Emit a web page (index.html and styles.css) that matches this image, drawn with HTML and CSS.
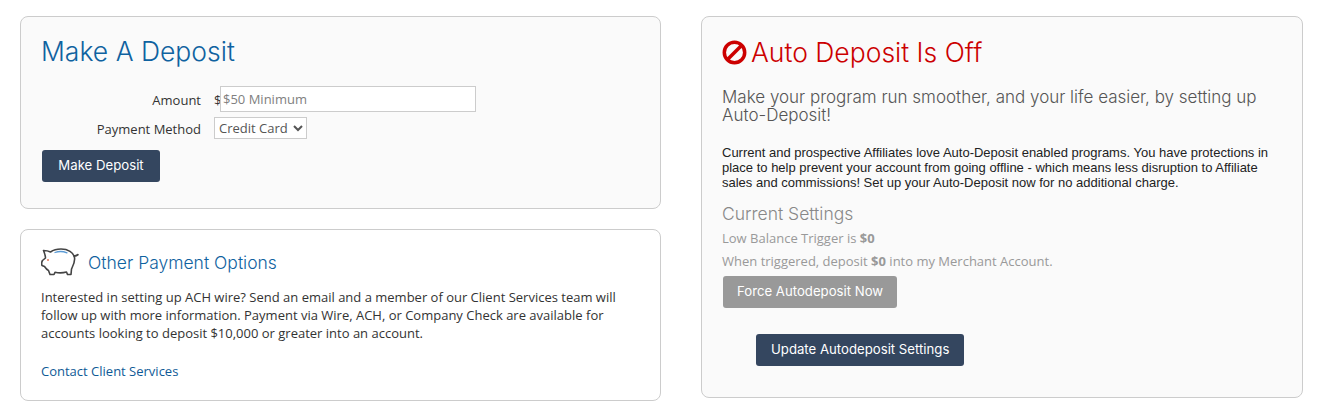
FILE: index.html
```html
<!DOCTYPE html>
<html lang="en">

<head>
    <meta charset="utf-8">
    <title>Deposit</title>
    <link rel="stylesheet" href="styles.css">
</head>

<body>
    <div class="page">
        <div class="col">
            <section class="card deposit">
                <h1 class="title">Make A Deposit</h1>
                <div class="form-row amount-row">
                    <label class="label">Amount</label>
                    <span class="dollar">$</span><input class="amount" type="text" placeholder="$50 Minimum">
                </div>
                <div class="form-row method-row">
                    <label class="label">Payment Method</label>
                    <select class="method">
                        <option>Credit Card</option>
                    </select>
                </div>
                <button class="btn">Make Deposit</button>
            </section>
            <section class="card other">
                <div class="other-head">
                    <svg class="piggy" width="38" height="29" viewBox="0 0 38 29" fill="none">
                        <path d="M2.500 2.500C5 2.500 7.500 3 9.500 4 13 1.500 17 1 20 1c7 0 12.500 3.500 13.500 8.500.8 4.500-1.500 8.500-3 11.500l-.5 5.500h-3.500l-1-2.500c-3.500 1-8 1-11.500.3l-1 2.200H9l-1.500-4c-2-1-3-2.500-4-4L1 17.500c-.7-2-.4-3.500.5-5l3-2.500c0-2-1-5-2-7.500z" stroke="#444" stroke-width="1.600" stroke-linejoin="round"/>
                        <path d="M33.500 8c1.300-.2 2.300-.6 3.200-1.300" stroke="#444" stroke-width="2" stroke-linecap="round"/>
                        <path d="M14 4.500c3.500-1.300 8-1.300 12 .3" stroke="#5b9bd5" stroke-width="1.300" stroke-linecap="round"/>
                        <circle cx="7" cy="12" r="1" fill="#e8795a"/>
                    </svg>
                    <h2 class="other-title">Other Payment Options</h2>
                </div>
                <p class="other-text">Interested in setting up ACH wire? Send an email and a member of our Client Services team will follow up with more information. Payment via Wire, ACH, or Company Check are available for accounts looking to deposit $10,000 or greater into an account.</p>
                <a class="contact" href="#">Contact Client Services</a>
            </section>
        </div>
        <section class="card auto">
            <h1 class="title off">
                <svg class="no-icon" width="25" height="25" viewBox="0 0 25 25" fill="none">
                    <circle cx="12.500" cy="12.500" r="10.200" stroke="#c00" stroke-width="3.500"/>
                    <path d="M5.500 19.500 19.500 5.500" stroke="#c00" stroke-width="3.500"/>
                </svg>
                Auto Deposit Is Off
            </h1>
            <p class="lead">Make your program run smoother, and your life easier, by setting up Auto-Deposit!</p>
            <p class="blurb">Current and prospective Affiliates love Auto-Deposit enabled programs. You have protections in place to help prevent your account from going offline - which means less disruption to Affiliate sales and commissions! Set up your Auto-Deposit now for no additional charge.</p>
            <h3 class="settings-title">Current Settings</h3>
            <p class="setting">Low Balance Trigger is <b>$0</b></p>
            <p class="setting">When triggered, deposit <b>$0</b> into my Merchant Account.</p>
            <button class="btn btn-grey">Force Autodeposit Now</button>
            <button class="btn btn-update">Update Autodeposit Settings</button>
        </section>
    </div>
</body>

</html>
```

FILE: styles.css
```css
* {
    box-sizing: border-box;
}

body {
    margin: 0;
    background: #fff;
    font-family: "Open Sans", sans-serif;
    font-size: 13px;
    color: #333;
}

.page {
    display: flex;
    align-items: flex-start;
    gap: 40px;
    padding: 16px 21px 0 20px;
}

.col {
    width: 641px;
    display: flex;
    flex-direction: column;
    gap: 20px;
}

.card {
    border: 1px solid #ccc;
    border-radius: 8px;
}

.deposit {
    height: 193px;
    padding: 18px 20px 0;
    background: #fafafa;
}

.title {
    margin: 0;
    font-family: Inter, sans-serif;
    font-size: 26.500px;
    line-height: 32px;
    font-weight: 300;
    color: #0f62a0;
}

.form-row {
    display: flex;
    align-items: center;
}

.amount-row {
    margin-top: 19px;
}

.method-row {
    margin-top: 5px;
}

.label {
    width: 160px;
    margin-right: 13px;
    padding-top: 2px;
    text-align: right;
}

.dollar {
    width: 6px;
    padding-top: 2px;
}

.amount {
    width: 256px;
    height: 26px;
    padding: 0 2px;
    border: 1px solid #ccc;
    background: #fff;
    font: 13px "Open Sans", sans-serif;
}

.amount::placeholder {
    color: #808080;
}

.method {
    width: 93px;
    height: 22px;
    border: 1px solid #ccc;
    background: #fff;
    color: #555;
    font: 13px "Open Sans", sans-serif;
}

.btn {
    display: block;
    height: 32px;
    padding: 0 14px 2px;
    border: 0;
    border-radius: 3px;
    background: #34465f;
    color: #fff;
    font-family: Inter, sans-serif;
    font-size: 13.200px;
}

.deposit .btn {
    width: 118px;
    margin: 11px 0 0 1px;
}

.other {
    height: 172px;
    padding: 18px 20px 0;
}

.other-head {
    display: flex;
    align-items: center;
    gap: 9px;
}

.other-title {
    margin: 0;
    font-family: Inter, sans-serif;
    font-size: 17.500px;
    font-weight: 300;
    color: #0f62a0;
}

.other-text {
    margin: 11px 0 0;
    line-height: 18px;
}

.contact {
    display: block;
    margin-top: 20px;
    color: #0f5a96;
    text-decoration: none;
}

.auto {
    width: 602px;
    height: 382px;
    padding: 19px 20px 0;
    background: #fafafa;
}

.off {
    display: flex;
    align-items: center;
    gap: 4px;
    color: #c00;
}

.lead {
    margin: 20px 0 0;
    font-family: Inter, sans-serif;
    font-size: 17px;
    font-weight: 300;
    line-height: 18px;
    color: #555;
}

.blurb {
    margin: 21px 0 0;
    font-family: "Liberation Sans", sans-serif;
    font-size: 13px;
    line-height: 15px;
    color: #222;
}

.settings-title {
    margin: 14px 0 0;
    font-family: Inter, sans-serif;
    font-size: 17.500px;
    font-weight: 300;
    line-height: 20px;
    color: #888;
}

.setting {
    margin: 5px 0 0;
    line-height: 18px;
    font-size: 13px;
    color: #999;
}

.btn-grey {
    margin: 6px 0 0 1px;
    background: #999;
}

.btn-update {
    margin: 26px 0 0 34px;
    padding: 0 15px 2px;
}
```
